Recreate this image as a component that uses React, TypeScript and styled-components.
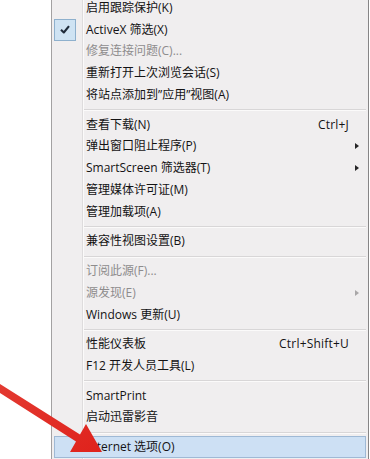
import styled, { createGlobalStyle } from "styled-components";

const GlobalStyle = createGlobalStyle`
  html, body {
    margin: 0;
    padding: 0;
    background: #ffffff;
    overflow: hidden;
  }
  body {
    font-family: "Open Sans", "Noto Sans CJK SC", sans-serif;
  }
`;

type Item = {
  label: string;
  shortcut?: string;
  submenu?: boolean;
  disabled?: boolean;
  checked?: boolean;
  active?: boolean;
};

const groups: Item[][] = [
  [
    { label: "启用跟踪保护(K)" },
    { label: "ActiveX 筛选(X)", checked: true },
    { label: "修复连接问题(C)...", disabled: true },
    { label: "重新打开上次浏览会话(S)" },
    { label: "将站点添加到”应用”视图(A)" },
  ],
  [
    { label: "查看下载(N)", shortcut: "Ctrl+J" },
    { label: "弹出窗口阻止程序(P)", submenu: true },
    { label: "SmartScreen 筛选器(T)", submenu: true },
    { label: "管理媒体许可证(M)" },
    { label: "管理加载项(A)" },
  ],
  [{ label: "兼容性视图设置(B)" }],
  [
    { label: "订阅此源(F)...", disabled: true },
    { label: "源发现(E)", disabled: true, submenu: true },
    { label: "Windows 更新(U)" },
  ],
  [
    { label: "性能仪表板", shortcut: "Ctrl+Shift+U" },
    { label: "F12 开发人员工具(L)" },
  ],
  [{ label: "SmartPrint" }, { label: "启动迅雷影音" }],
  [{ label: "Internet 选项(O)", active: true }],
];

const Page = styled.div`
  position: relative;
  width: 370px;
  height: 459px;
  overflow: hidden;
  background: #ffffff;
`;

const Menu = styled.div`
  margin: -3px 0 0 51px;
  width: 318px;
  box-sizing: border-box;
  border-left: 1px solid #a3a1a2;
  border-right: 1px solid #868586;
  background:
    linear-gradient(
      to right,
      transparent 30px,
      #dedcdd 30px,
      #dedcdd 31px,
      #fbfafa 31px,
      #fbfafa 32px,
      transparent 32px
    ),
    #f0eeef;
  padding-bottom: 8px;
`;

const Row = styled.div<{ $active?: boolean; $disabled?: boolean }>`
  display: grid;
  grid-template-columns: 31px 1fr auto 16px;
  align-items: center;
  height: 21.8px;
  box-sizing: border-box;
  margin: 0 2px;
  border: 1px solid ${(p) => (p.$active ? "#9fb9d5" : "transparent")};
  background: ${(p) => (p.$active ? "#cde0f4" : "transparent")};
  color: ${(p) => (p.$disabled ? "#8e8c8d" : "#141314")};
  font-size: 12px;
  white-space: nowrap;
`;

const Gutter = styled.div`
  height: 100%;
  position: relative;
`;

const CheckBox = styled.div`
  position: absolute;
  left: -1px;
  top: -1px;
  width: 22px;
  height: 22px;
  box-sizing: border-box;
  border: 1px solid #8eb0cd;
  background: #cfe3f3;
  display: flex;
  align-items: center;
  justify-content: center;
`;

const Label = styled.span`
  line-height: 1;
`;

const Shortcut = styled.span`
  line-height: 1;
  letter-spacing: 0.2px;
`;

const ArrowCell = styled.div`
  display: flex;
  justify-content: flex-end;
  padding-right: 6px;
`;

const SubArrow = styled.span<{ $disabled?: boolean }>`
  width: 0;
  height: 0;
  border-top: 3.5px solid transparent;
  border-bottom: 3.5px solid transparent;
  border-left: 4px solid ${(p) => (p.$disabled ? "#a9a7a8" : "#262526")};
`;

const Separator = styled.div`
  height: 7.8px;
  display: flex;
  align-items: center;
  padding-left: 32px;
  padding-right: 2px;
`;

const SepLine = styled.div`
  flex: 1;
  height: 1px;
  background: #d8d6d7;
  box-shadow: 0 1px 0 #fbfafa;
`;

const Pointer = styled.svg`
  position: absolute;
  left: 0;
  top: 0;
  pointer-events: none;
`;

function MenuRow({ item }: { item: Item }) {
  return (
    <Row $active={item.active} $disabled={item.disabled}>
      <Gutter>
        {item.checked && (
          <CheckBox>
            <svg width="10" height="9" viewBox="0 0 10 9">
              <path
                d="M1 4.8 L3.8 7.5 L9 1.2"
                fill="none"
                stroke="#1f2b3a"
                strokeWidth="2.1"
                strokeLinejoin="round"
              />
            </svg>
          </CheckBox>
        )}
      </Gutter>
      <Label>{item.label}</Label>
      <Shortcut>{item.shortcut}</Shortcut>
      <ArrowCell>{item.submenu && <SubArrow $disabled={item.disabled} />}</ArrowCell>
    </Row>
  );
}

export default function App() {
  return (
    <Page>
      <GlobalStyle />
      <Menu>
        {groups.map((group, gi) => (
          <div key={gi}>
            {gi > 0 && (
              <Separator>
                <SepLine />
              </Separator>
            )}
            {group.map((item) => (
              <MenuRow key={item.label} item={item} />
            ))}
          </div>
        ))}
      </Menu>
      <Pointer width="370" height="459" viewBox="0 0 370 459">
        <defs>
          <linearGradient id="arrowRed" x1="0" y1="0" x2="1" y2="1">
            <stop offset="0" stopColor="#e33a31" />
            <stop offset="1" stopColor="#df221c" />
          </linearGradient>
        </defs>
        <polygon
          points="0,384 80,434.6 86,424 102,452 70,452 76,441.4 0,393"
          fill="url(#arrowRed)"
        />
      </Pointer>
    </Page>
  );
}
